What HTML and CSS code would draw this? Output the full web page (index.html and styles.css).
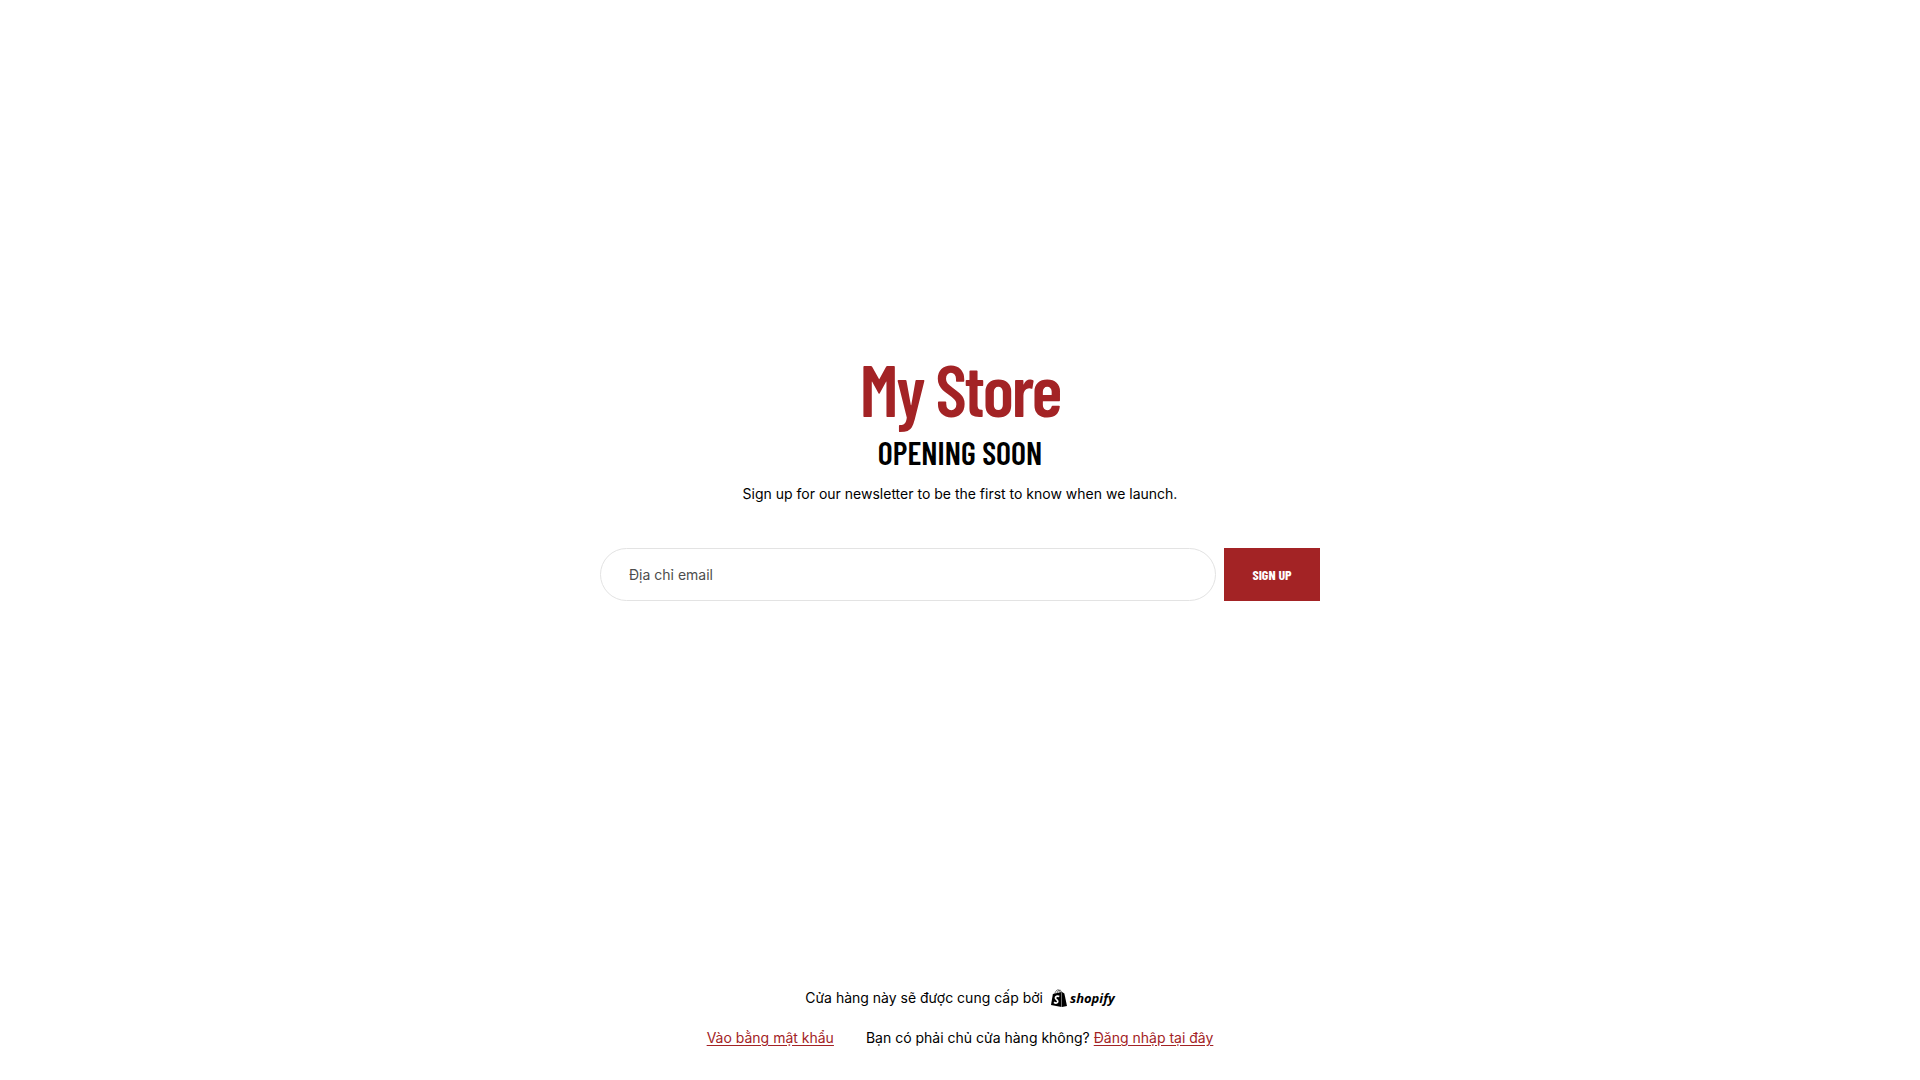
FILE: index.html
```html
<!DOCTYPE html>
<html lang="vi">
<head>
    <meta charset="UTF-8">
    <meta name="viewport" content="width=device-width, initial-scale=1.0">
    <title>My Store</title>
    <link rel="stylesheet" href="styles.css">
</head>
<body>
    <main class="password-main">
        <h1 class="store-name">My Store</h1>
        <h2 class="banner-heading">OPENING SOON</h2>
        <p class="banner-text">Sign up for our newsletter to be the first to know when we launch.</p>
        <form class="newsletter-form">
            <input type="email" id="email" class="field-input" placeholder="Địa chỉ email" aria-label="Địa chỉ email">
            <button type="submit" class="button">SIGN UP</button>
        </form>
    </main>

    <footer class="password-footer">
        <div class="powered-by">
            <span>Cửa hàng này sẽ được cung cấp bởi</span>
            <a href="#" class="shopify-logo">
                <svg class="shopify-bag" viewBox="0 0 17 19" aria-hidden="true">
                    <path d="M2 5.2 11.2 3v16L0 17z" fill="#000"/>
                    <path d="M11.7 3.1 14.2 4.7 17 18l-5.3 1z" fill="#000"/>
                    <path d="M4 5.6C4.4 2.8 5.9.8 7.4.8s2.3 1.4 2.3 3.4M6.3 4.8C6.8 2.4 8 1.2 9.3 1.2s1.7 1 1.9 2.6" fill="none" stroke="#000" stroke-width=".6"/>
                    <path d="M8.8 8C6.8 7 4.6 7.9 4.7 9.5c.1 1.6 2.6 1.8 2.5 3.7-.1 1.8-2.2 2.3-4 .8" fill="none" stroke="#fff" stroke-width="1.8"/>
                </svg>
                <span class="shopify-word">shopify</span>
            </a>
        </div>
        <div class="footer-links">
            <a href="#" class="link">Vào bằng mật khẩu</a>
            <span>Bạn có phải chủ cửa hàng không? <a href="#" class="link">Đăng nhập tại đây</a></span>
        </div>
    </footer>
</body>
</html>
```

FILE: styles.css
```css
* {
    box-sizing: border-box;
}
body {
    margin: 0;
    min-height: 100vh;
    display: flex;
    flex-direction: column;
    font-family: Inter, "Noto Sans", sans-serif;
    font-size: 14px;
    line-height: 20px;
    font-variant-ligatures: none;
    color: #000;
    background-color: #fff;
}
.password-main {
    flex: 1;
    display: flex;
    flex-direction: column;
    align-items: center;
    justify-content: center;
    padding: 0 20px 36px;
}
.store-name,
.banner-heading,
.button {
    font-family: "Barlow Condensed", "Roboto Condensed", "Liberation Sans Narrow", sans-serif;
}
.store-name {
    margin: 0;
    font-size: 72px;
    line-height: 72px;
    font-weight: 600;
    letter-spacing: -0.03em;
    color: #a32325;
}
.banner-heading {
    margin: 8px 0 12px;
    font-size: 32px;
    line-height: 40px;
    font-weight: 600;
}
.banner-text {
    margin: 0 0 44px;
    text-align: center;
}
.newsletter-form {
    display: flex;
    gap: 8px;
    width: 100%;
    max-width: 720px;
}
.field-input {
    flex: 1;
    min-width: 0;
    height: 53px;
    padding: 0 28px;
    border: 1px solid #e3e3e3;
    border-radius: 27px;
    font: inherit;
    color: #000;
    background-color: #fff;
}
.field-input::placeholder {
    color: #4d4d4d;
    opacity: 1;
}
.button {
    min-width: 96px;
    padding: 0 16px;
    border: none;
    font-size: 14px;
    font-weight: 700;
    color: #fff;
    background-color: #a32325;
    cursor: pointer;
}
.password-footer {
    display: flex;
    flex-direction: column;
    align-items: center;
    gap: 20px;
    padding: 0 20px 32px;
}
.powered-by {
    display: flex;
    align-items: center;
    gap: 8px;
}
.shopify-logo {
    display: flex;
    align-items: center;
    gap: 3px;
    color: #000;
    text-decoration: none;
}
.shopify-bag {
    width: 16px;
    height: 18px;
}
.shopify-word {
    font-family: "Open Sans", sans-serif;
    font-size: 13px;
    font-style: italic;
    font-weight: 700;
}
.footer-links {
    display: flex;
    flex-wrap: wrap;
    justify-content: center;
    column-gap: 32px;
}
.link {
    color: #a32325;
    text-decoration: underline;
    text-underline-offset: 2px;
}
```
